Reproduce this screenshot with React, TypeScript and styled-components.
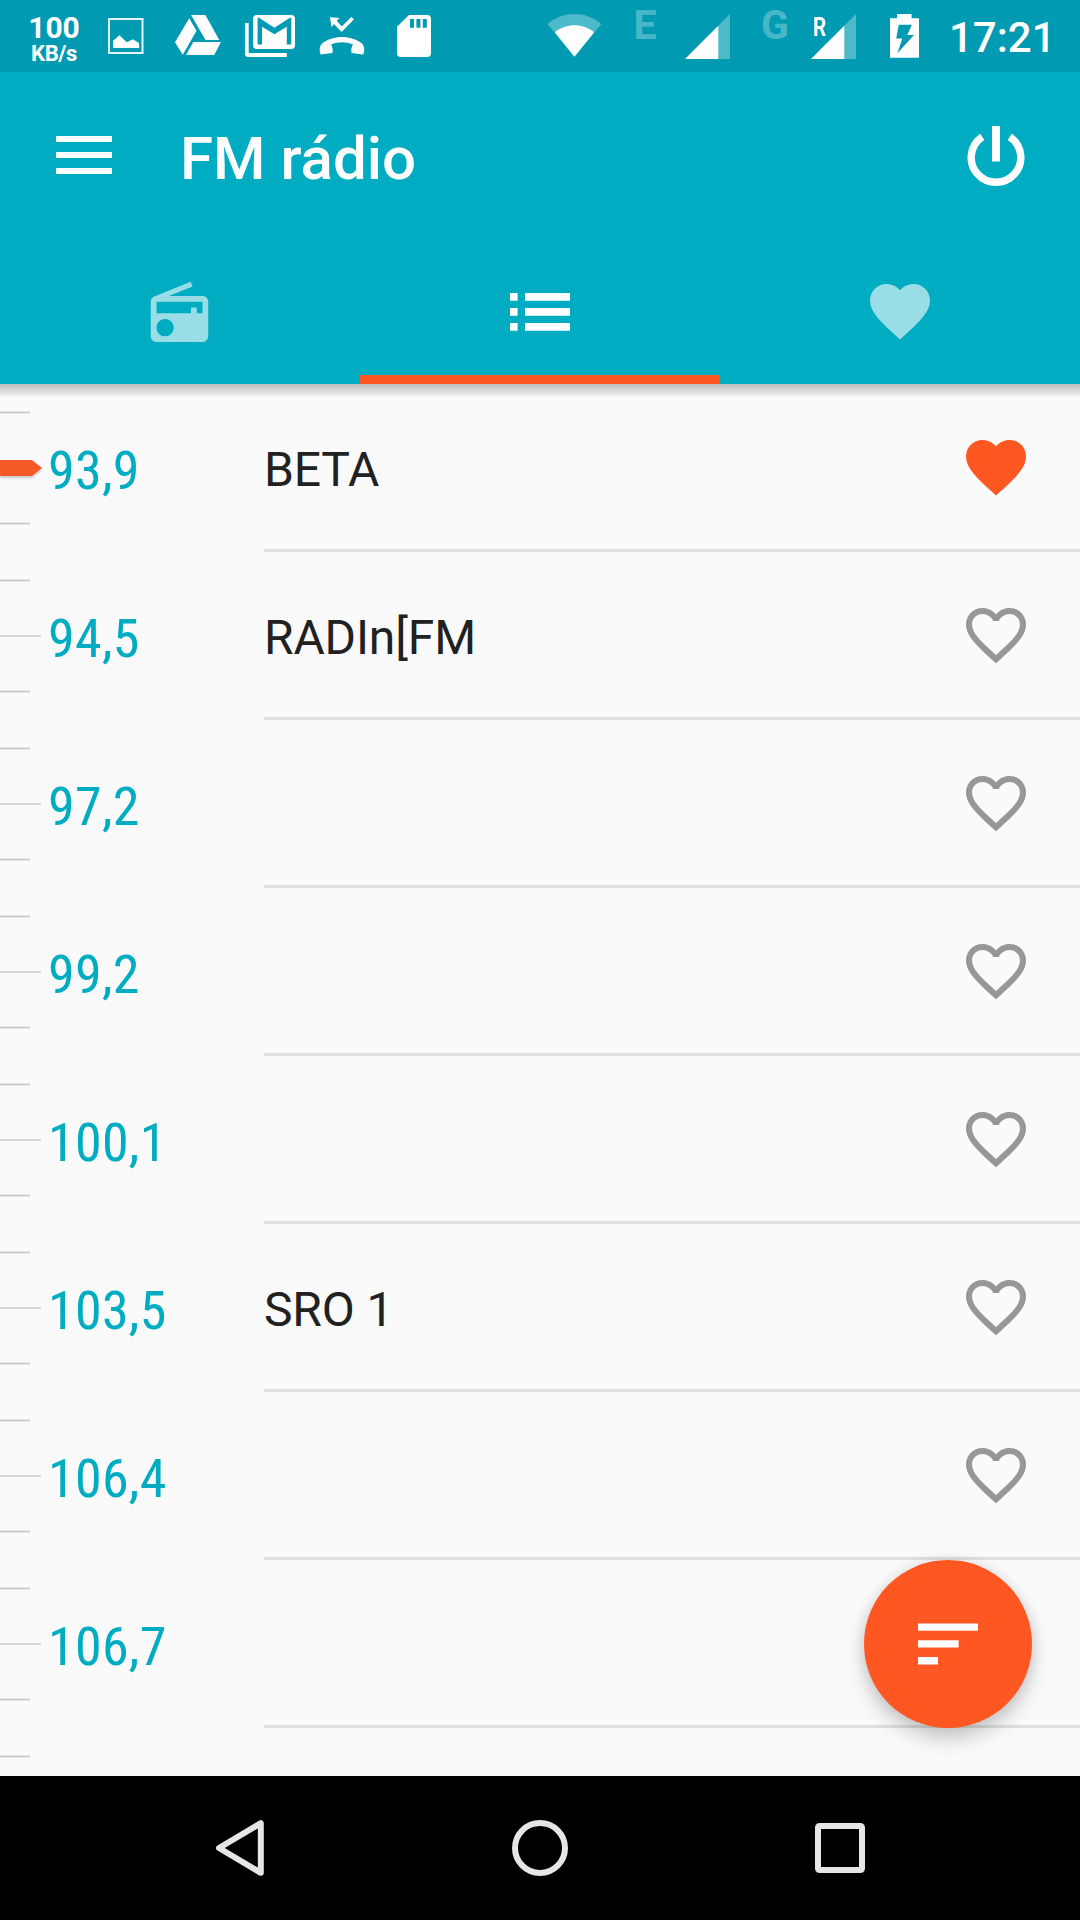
import React from "react";
import styled, { createGlobalStyle, css } from "styled-components";

const teal = "#00acc1";
const tealDark = "#009bb2";
const orange = "#ff5722";

const GlobalStyle = createGlobalStyle`
  *, *::before, *::after { box-sizing: border-box; }
  body { margin: 0; background: #fafafa; font-family: Roboto, "Noto Sans", sans-serif; }
  svg { display: block; flex: none; }
  button { border: 0; padding: 0; background: none; color: inherit; font: inherit; }
`;

const Screen = styled.div`
  width: 1080px;
  height: 1920px;
  display: flex;
  flex-direction: column;
  overflow: hidden;
  position: relative;
  background: #fafafa;
`;

/* ---------- status bar ---------- */

const StatusBar = styled.header`
  height: 72px;
  flex: none;
  display: flex;
  padding-left: 24px;
  background: ${tealDark};
  color: #fff;
`;

const StatusItem = styled.div<{ $gap: number; $width: number }>`
  flex: none;
  position: relative;
  width: ${(p) => p.$width}px;
  margin-left: ${(p) => p.$gap}px;
`;

const NetSpeed = styled.div`
  width: 60px;
  flex: none;
  display: flex;
  flex-direction: column;
  align-items: center;
  padding-top: 12px;
  font-weight: 700;
`;

const SpeedValue = styled.span`
  font-size: 30px;
  line-height: 32px;
`;

const SpeedUnit = styled.span`
  font-size: 22px;
  line-height: 19px;
  letter-spacing: -0.4px;
`;

const NetworkType = styled.div<{ $gap: number }>`
  flex: none;
  width: 28px;
  margin-left: ${(p) => p.$gap}px;
  text-align: center;
  font-size: 41px;
  line-height: 51px;
  font-weight: 700;
  color: rgba(255, 255, 255, 0.3);
`;

const RoamingBadge = styled.span`
  position: absolute;
  left: 2px;
  top: 12px;
  font-size: 26px;
  line-height: 30px;
  font-weight: 700;
  transform: scaleX(0.8);
  transform-origin: left;
`;

const Clock = styled.div`
  margin-left: 29px;
  padding-top: 3px;
  font-size: 42px;
  line-height: 70px;
  font-weight: 500;
  white-space: nowrap;
`;

/* Each status glyph is drawn in bar coordinates, starting at its own left edge. */
const Glyph = ({ x, w, children }: { x: number; w: number; children: React.ReactNode }) => (
  <svg width={w} height={72} viewBox={`${x} 0 ${w} 72`} fill="#fff">
    {children}
  </svg>
);

const SignalGlyph = () => (
  <Glyph x={0} w={45}>
    <path d="M45 14V59H0z" fillOpacity={0.3} />
    <path d="M33.3 25.7V59H0z" />
  </Glyph>
);

/* ---------- app bar ---------- */

const AppBar = styled.div`
  height: 312px;
  flex: none;
  display: flex;
  flex-direction: column;
  background: ${teal};
  color: #fff;
`;

const Toolbar = styled.div`
  height: 168px;
  display: flex;
  align-items: center;
  padding: 0 48px;
`;

const IconButton = styled.button`
  width: 72px;
  height: 72px;
  flex: none;
  display: flex;
  align-items: center;
  justify-content: center;
`;

const Title = styled.h1`
  flex: 1;
  margin: 0;
  padding: 5px 0 0 60px;
  font-size: 60px;
  line-height: 72px;
  font-weight: 500;
`;

const Tabs = styled.nav`
  flex: 1;
  display: grid;
  grid-template-columns: repeat(3, 1fr);
`;

const Tab = styled.button<{ $active?: boolean }>`
  display: flex;
  align-items: flex-start;
  justify-content: center;
  padding-top: 35px;
  color: ${(p) => (p.$active ? "#fff" : "#99dee6")};
  border-bottom: 9px solid ${(p) => (p.$active ? orange : "transparent")};
`;

/* ---------- station list ---------- */

const Stations = styled.main`
  flex: 1;
  min-height: 0;
  overflow: hidden;
  position: relative;

  &::before {
    content: "";
    position: absolute;
    inset: 0 0 auto 0;
    height: 14px;
    background: linear-gradient(#bfbfbf, #cbcbcb 25%, #e4e4e4 65%, #f5f5f5 90%, #fafafa);
  }
`;

const Row = styled.div`
  height: 168px;
  display: flex;
`;

const Scale = styled.div`
  width: 48px;
  flex: none;
  display: flex;
  flex-direction: column;
  justify-content: space-between;
  padding: 27px 0;
  height: 168px;
`;

const MinorTick = styled.div`
  width: 30px;
  height: 3px;
  background: linear-gradient(#e6e6e6 1px, #c9c9c9 1px, #c9c9c9 2px, #e6e6e6 2px);
`;

const MajorTick = styled.div`
  width: 41px;
  height: 2px;
  background: #d6d6d6;
`;

const Needle = styled.svg`
  margin: -8px 0;
  filter: drop-shadow(0 2px 1px rgba(0, 0, 0, 0.2));
`;

const Frequency = styled.div`
  width: 216px;
  flex: none;
  padding-top: 4px;
  font-family: "Roboto Condensed", Roboto, sans-serif;
  font-stretch: 75%;
  font-size: 54px;
  line-height: 165px;
  letter-spacing: 0.3px;
  color: ${teal};
`;

const Station = styled.div`
  flex: 1;
  display: flex;
  border-bottom: 3px solid #dfdfdf;
  padding-right: 48px;
`;

const StationName = styled.div`
  flex: 1;
  padding-top: 3px;
  font-size: 48px;
  line-height: 165px;
  letter-spacing: -0.15px;
  color: #212121;
`;

const Favourite = styled.button<{ $on?: boolean }>`
  height: 72px;
  margin-top: 47px;
  ${(p) =>
    p.$on
      ? css`
          color: ${orange};
        `
      : css`
          color: #979797;
        `}
`;

const Fab = styled.button`
  position: absolute;
  right: 48px;
  bottom: 192px;
  width: 168px;
  height: 168px;
  border-radius: 50%;
  display: flex;
  align-items: center;
  justify-content: center;
  background: ${orange};
  box-shadow: 0 12px 20px rgba(0, 0, 0, 0.18), 0 0 14px rgba(0, 0, 0, 0.1);
`;

/* ---------- navigation bar ---------- */

const NavBar = styled.footer`
  height: 144px;
  flex: none;
  display: grid;
  grid-template-columns: repeat(3, 300px);
  justify-content: center;
  background: #000;
  color: #e6e6e6;
`;

const NavButton = styled.button`
  display: flex;
  align-items: center;
  justify-content: center;
`;

const HeartIcon = () => (
  <svg width="72" height="72" viewBox="0 0 24 24" fill="currentColor">
    <path d="M12 21.5l-1.45-1.32C5.4 15.45 2 12.28 2 8.5 2 5.42 4.42 3 7.5 3c1.74 0 3.41.81 4.5 2.09C13.09 3.81 14.76 3 16.5 3 19.58 3 22 5.42 22 8.5c0 3.78-3.4 6.95-8.55 11.68L12 21.5z" />
  </svg>
);

const HeartOutlineIcon = () => (
  <svg width="72" height="72" viewBox="0 0 24 24" fill="currentColor">
    <path d="M16.5 3c-1.74 0-3.41.81-4.5 2.09C10.91 3.81 9.24 3 7.5 3 4.42 3 2 5.42 2 8.5c0 3.78 3.4 6.9 8.55 11.63L12 21.45l1.45-1.32C18.6 15.4 22 12.28 22 8.5 22 5.42 19.58 3 16.5 3zm-4.4 15.55l-.1.1-.1-.1C7.14 14.24 4 11.39 4 8.5 4 6.5 5.5 5 7.5 5c1.54 0 3.04.99 3.57 2.36h1.87C13.46 5.99 14.96 5 16.5 5c2 0 3.5 1.5 3.5 3.5 0 2.89-3.14 5.74-7.9 10.05z" />
  </svg>
);

const stations = [
  { frequency: "93,9", name: "BETA", tuned: true, favourite: true },
  { frequency: "94,5", name: "RADIn[FM" },
  { frequency: "97,2", name: "" },
  { frequency: "99,2", name: "" },
  { frequency: "100,1", name: "" },
  { frequency: "103,5", name: "SRO 1" },
  { frequency: "106,4", name: "" },
  { frequency: "106,7", name: "", covered: true },
];

export default function App() {
  return (
    <Screen>
      <GlobalStyle />
      <StatusBar>
        <NetSpeed>
          <SpeedValue>100</SpeedValue>
          <SpeedUnit>KB/s</SpeedUnit>
        </NetSpeed>
        <StatusItem $gap={24} $width={36}>
          <Glyph x={108} w={36}>
            <rect x="109" y="19" width="33.5" height="34" fill="none" stroke="#e4f5f7" strokeWidth="2" />
            <path d="M113 40.7L119.5 35.3 126.7 42.3 133 39.3 139.1 43.3V48H113z" />
          </Glyph>
        </StatusItem>
        <StatusItem $gap={30} $width={48}>
          <Glyph x={174} w={48}>
            <path d="M191.1 15H205.4L219.3 40H205.5zM189.2 18.3L196.5 30.7 182.8 54.7 175 42.3zM193.3 42H220.9L214.2 55H186z" />
          </Glyph>
        </StatusItem>
        <StatusItem $gap={22} $width={52}>
          <Glyph x={244} w={52}>
            <rect x="253" y="15" width="42" height="34" rx="4" />
            <path d="M245 23H248.7V53.1H286.8V57H248.5Q245 57 245 53.5z" />
            <path
              fill={tealDark}
              d="M257.6 17.7H259L274.4 27.7 290 17.7H291.3V44.6H286.8V26.7L274.4 34.3 262 26.7V44.6H257.6z"
            />
          </Glyph>
        </StatusItem>
        <StatusItem $gap={23} $width={46}>
          <Glyph x={319} w={46}>
            <path d="M320.8 54.6C319 50 319.5 46 322 43.5C333 34.8 351 34.8 362 43.5C364.5 46 365 50 363.2 54.6L351.5 53Q350.5 49 352.8 44.2Q342 40.5 331.2 44.2Q333.5 49 332.5 53z" />
            <path d="M329.9 17.3L339.5 18 336.8 20.7 341.8 26.6 351.2 17 354 19.3 341.6 32 334 24 331.6 27.3z" />
          </Glyph>
        </StatusItem>
        <StatusItem $gap={31} $width={36}>
          <Glyph x={396} w={36}>
            <path d="M409 15H427Q431 15 431 19V53Q431 57 427 57H401Q397 57 397 53V26.7z" />
            <path fill={tealDark} d="M410 19h4v8.7h-4zM416.4 19h4v8.7h-4zM422.8 19h4v8.7h-4z" />
          </Glyph>
        </StatusItem>
        <StatusItem $gap={115} $width={54}>
          <Glyph x={547} w={54}>
            <path fillOpacity={0.3} d="M574.4 56.7L547.4 24C563 10.7 586 10.7 601.4 24z" />
            <path d="M574.4 56.7L554.8 32.3C566 23 583 23 594.2 32.3z" />
          </Glyph>
        </StatusItem>
        <NetworkType $gap={30}>E</NetworkType>
        <StatusItem $gap={26} $width={45}>
          <SignalGlyph />
        </StatusItem>
        <NetworkType $gap={31}>G</NetworkType>
        <StatusItem $gap={22} $width={45}>
          <SignalGlyph />
          <RoamingBadge>R</RoamingBadge>
        </StatusItem>
        <StatusItem $gap={33} $width={31}>
          <Glyph x={889} w={31}>
            <path d="M897 14H911.6V18.3H919V57.7H890V18.3H897z" />
            <path fill={tealDark} d="M898.8 24.7H911.9L907.2 35H914L897.4 53.3 902.3 38.5H896.2z" />
          </Glyph>
        </StatusItem>
        <Clock>17:21</Clock>
      </StatusBar>

      <AppBar>
        <Toolbar>
          <IconButton aria-label="Menu">
            <svg width="56" height="40" viewBox="0 0 56 40" fill="currentColor">
              <path d="M0 0h56v6H0zM0 16h56v6H0zM0 32h56v6H0z" />
            </svg>
          </IconButton>
          <Title>FM rádio</Title>
          <IconButton aria-label="Power">
            <svg width="58" height="60" viewBox="0 0 58 60" fill="none" stroke="currentColor">
              <path strokeWidth="8" d="M29 0v35.5" />
              <path strokeWidth="7.4" d="M15.3 10.8A24.8 24.8 0 1 0 42.7 10.8" />
            </svg>
          </IconButton>
        </Toolbar>
        <Tabs>
          <Tab aria-label="Radio">
            <svg width="70" height="76" viewBox="0 -1.33 24.35 26.43" fill="currentColor">
              <path d="M3.24 6.15C2.51 6.43 2 7.17 2 8v12c0 1.1.89 2 2 2h16c1.11 0 2-.9 2-2V8c0-1.11-.89-2-2-2H8.3l8.26-3.34L15.88 1 3.24 6.15zM7 20c-1.66 0-3-1.34-3-3s1.34-3 3-3 3 1.34 3 3-1.34 3-3 3zm13-8h-2v-2h-2v2H4V8h16v4z" />
            </svg>
          </Tab>
          <Tab $active aria-label="Stations">
            <svg width="60" height="72" viewBox="0 0 60 72" fill="currentColor">
              <path d="M0 18.1h7.6v7.6H0zM15 18.1h45v7.6H15zM0 33.1h7.6v7.6H0zM15 33.1h45v7.6H15zM0 48.1h7.6v7.6H0zM15 48.1h45v7.6H15z" />
            </svg>
          </Tab>
          <Tab aria-label="Favourites">
            <HeartIcon />
          </Tab>
        </Tabs>
      </AppBar>

      <Stations>
        {stations.map((s) => (
          <Row key={s.frequency}>
            <Scale>
              <MinorTick />
              {s.tuned ? (
                <Needle width="42" height="16" viewBox="0 0 42 16" fill="#f45a27">
                  <path d="M0 0H32L42 8 32 16H0z" />
                </Needle>
              ) : (
                <MajorTick />
              )}
              <MinorTick />
            </Scale>
            <Frequency>{s.frequency}</Frequency>
            <Station>
              <StationName>{s.name}</StationName>
              {!s.covered && (
                <Favourite $on={s.favourite} aria-label="Favourite">
                  {s.favourite ? <HeartIcon /> : <HeartOutlineIcon />}
                </Favourite>
              )}
            </Station>
          </Row>
        ))}
        <Row>
          <Scale>
            <MinorTick />
          </Scale>
        </Row>
      </Stations>

      <NavBar>
        <NavButton aria-label="Back">
          <svg width="48" height="56" viewBox="0 0 48 56" fill="none" stroke="currentColor">
            <path strokeWidth="6" strokeLinejoin="round" d="M44.8 3.2V52.8L3 28z" />
          </svg>
        </NavButton>
        <NavButton aria-label="Home">
          <svg width="56" height="56" viewBox="0 0 56 56" fill="none" stroke="currentColor">
            <circle cx="28" cy="28" r="25" strokeWidth="6" />
          </svg>
        </NavButton>
        <NavButton aria-label="Recents">
          <svg width="50" height="50" viewBox="0 0 50 50" fill="none" stroke="currentColor">
            <rect x="3" y="3" width="44" height="44" rx="1.5" strokeWidth="6" />
          </svg>
        </NavButton>
      </NavBar>

      <Fab aria-label="Sort">
        <svg width="60" height="42" viewBox="0 0 60 42" fill="#fff">
          <path d="M0 .4h60v7.4H0zM0 17.2h40.6v7.4H0zM0 34.1h20v7.4H0z" />
        </svg>
      </Fab>
    </Screen>
  );
}
